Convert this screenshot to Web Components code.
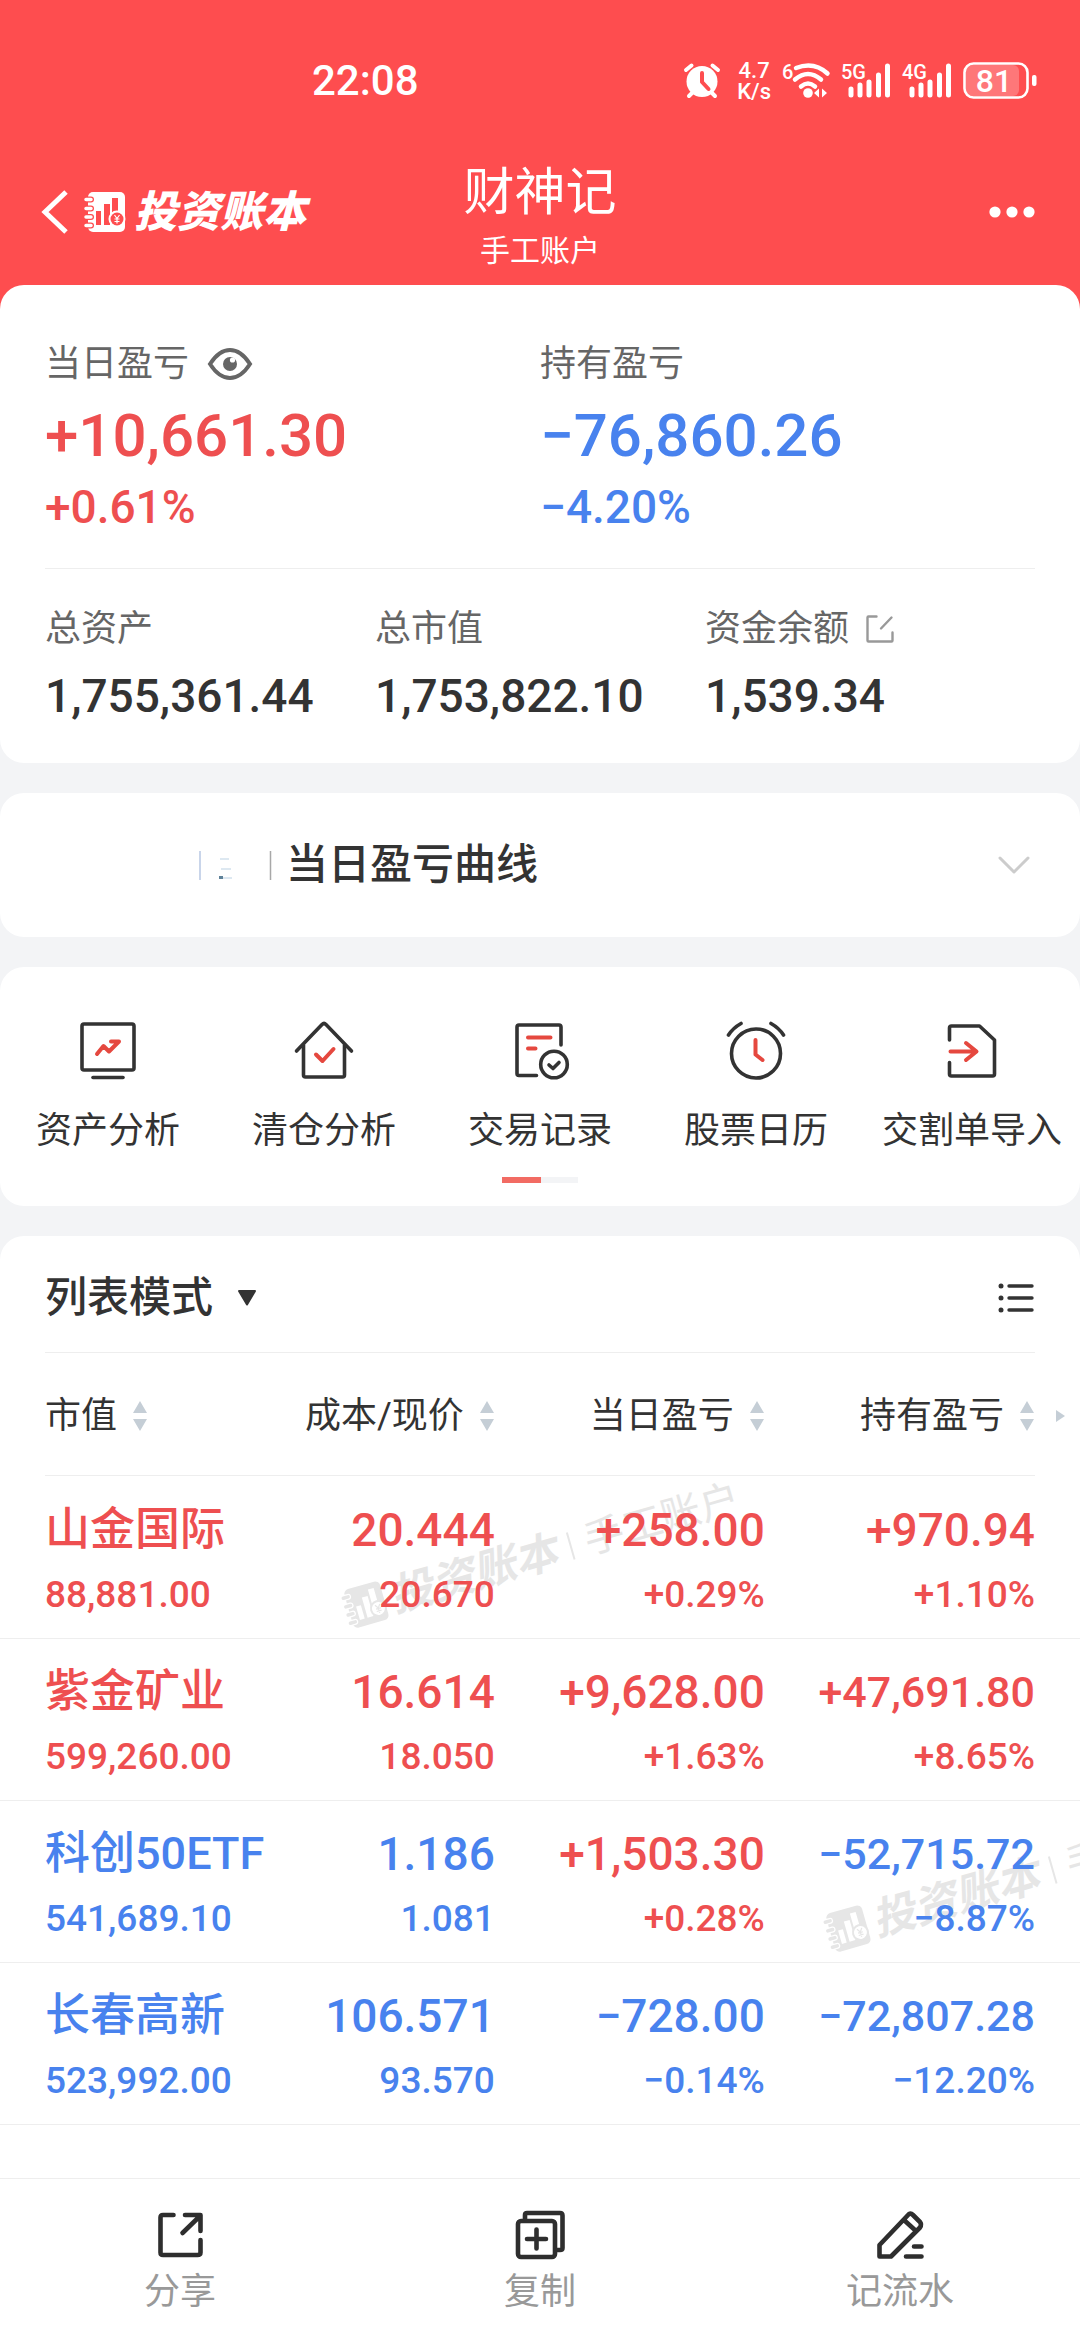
<!DOCTYPE html>
<html lang="zh-CN">
<head>
<meta charset="utf-8">
<meta name="viewport" content="width=device-width, initial-scale=1">
<title>投资账本</title>
<style>
  :root {
    --brand: #fe4d4f;
    --up: #ee4f50;
    --down: #4882ee;
    --ink: #333;
    --muted: #666;
    --faint: #999;
    --line: #eee;
    --page: #f3f4f6;
    --edge: 45px;
  }
  body {
    margin: 0;
    background: var(--page);
    color: var(--ink);
    font-family: Roboto, "Noto Sans CJK SC", sans-serif;
    font-size: 36px;
    line-height: 44px;
  }
</style>
</head>
<body>
<ledger-app>
  <status-bar slot="top" time="22:08"></status-bar>
  <nav-header slot="top">
    <span slot="title">财神记</span>
    <span slot="subtitle">手工账户</span>
  </nav-header>

  <ledger-card>
    <account-summary></account-summary>
  </ledger-card>
  <ledger-card>
    <curve-toggle>当日盈亏曲线</curve-toggle>
  </ledger-card>
  <ledger-card>
    <tool-strip>
      <tool-item icon="monitor">资产分析</tool-item>
      <tool-item icon="house">清仓分析</tool-item>
      <tool-item icon="record">交易记录</tool-item>
      <tool-item icon="clock">股票日历</tool-item>
      <tool-item icon="import">交割单导入</tool-item>
    </tool-strip>
  </ledger-card>
  <ledger-card class="last">
    <list-toolbar></list-toolbar>
    <holdings-table></holdings-table>
  </ledger-card>

  <bottom-bar slot="bottom">
    <bar-action icon="share">分享</bar-action>
    <bar-action icon="copy">复制</bar-action>
    <bar-action icon="pen">记流水</bar-action>
  </bottom-bar>
</ledger-app>

<script>
const RESET = `
  :host, * { box-sizing: border-box; }
  button, select { font: inherit; color: inherit; background: none; border: 0; padding: 0; margin: 0; cursor: pointer; }
  svg { display: block; flex: none; overflow: visible; }
`;

class Part extends HTMLElement {
  connectedCallback() {
    if (this.shadowRoot) return;
    this.attachShadow({ mode: 'open' });
    this.shadowRoot.innerHTML = `<style>:host{display:block}${RESET}${this.css()}</style>${this.html()}`;
  }
  css() { return ''; }
  html() { return '<slot></slot>'; }
}

/* Spiral-bound notebook with a bar chart and a coin */
const notebook = (body, cut) => `
  <svg class="book" width="42" height="42" viewBox="0 0 42 42" aria-hidden="true">
    <rect x="4" y="1" width="37" height="40" rx="5" fill="${body}"/>
    <g stroke="${cut}" stroke-width="6" stroke-linecap="round"><path d="M3 8.500H7M3 17.500H7M3 26H7M3 34.500H7"/></g>
    <g stroke="${body}" stroke-width="3.500" stroke-linecap="round"><path d="M2 8.500H7M2 17.500H7M2 26H7M2 34.500H7"/></g>
    <path d="M12 20h5v14h-5zM20 13h6v21h-6zM28 7h6v16h-6z" fill="${cut}"/>
    <circle cx="33" cy="28" r="8.500" fill="${body}"/><circle cx="33" cy="28" r="6.500" fill="${cut}"/>
    <path d="M30.500 24L33 27.500L35.500 24M33 27.500V32.500M30.500 28H35.500M30.500 30.500H35.500" fill="none" stroke="${body}" stroke-width="1.200"/>
  </svg>`;

customElements.define('ledger-app', class extends Part {
  css() { return `
    :host { display: flex; flex-direction: column; min-height: 100vh; }
    header { background: var(--brand); padding-bottom: 24px; margin-bottom: -24px; }
    main { flex: 1; display: flex; flex-direction: column; gap: 30px; }
  `; }
  html() { return `<header><slot name="top"></slot></header><main><slot></slot></main><slot name="bottom"></slot>`; }
});

customElements.define('status-bar', class extends Part {
  css() { return `
    :host { display: flex; align-items: center; justify-content: space-between; height: 157px; padding: 4px 43px 0 312px; color: #fff; }
    time { font-size: 42px; font-weight: 500; }
    .icons { display: flex; align-items: center; gap: 11px; }
    .alarm { margin-right: 6px; }
    .speed { font-size: 22px; line-height: 21px; font-weight: 500; text-align: center; }
    .speed span { display: block; }
    text { font-weight: 500; fill: #fff; }
  `; }
  signal(label) { return `
    <svg width="50" height="40" viewBox="0 0 50 40">
      <text x="0" y="18" font-size="20">${label}</text>
      <path d="M10 28V34M19 24V34M28 21V34M37.500 14V34M46.500 5V34" stroke="#fff" stroke-width="5" stroke-linecap="round"/>
    </svg>`; }
  html() { return `
    <time>${this.getAttribute('time')}</time>
    <div class="icons">
      <svg class="alarm" width="36" height="40" viewBox="0 0 36 40">
        <path d="M2 9L7.500 4.500M34 9L28.500 4.500M8 32L5 35M28 32L31 35" stroke="#fff" stroke-width="4" stroke-linecap="round"/>
        <circle cx="18" cy="20.500" r="15.500" fill="#fff"/>
        <path d="M18 12V21L24.500 28" fill="none" stroke="#fe4d4f" stroke-width="4" stroke-linecap="round" stroke-linejoin="round"/>
      </svg>
      <div class="speed"><span>4.7</span><span>K/s</span></div>
      <svg width="48" height="40" viewBox="0 0 48 40">
        <text x="0" y="18" font-size="20">6</text>
        <g fill="none" stroke="#fff" stroke-width="4.500" stroke-linecap="round">
          <path d="M14 7Q32 0 45.500 12.500M13 18.500Q26 7.500 39 18.500M19 25.500Q26 19.500 33 25.500"/>
        </g>
        <circle cx="26" cy="32" r="4.800" fill="#fff"/>
        <path d="M37 27.500V36.500L32 32zM40 27.500V36.500L45 32z" fill="#fff"/>
      </svg>
      ${this.signal('5G')}${this.signal('4G')}
      <svg width="74" height="40" viewBox="0 0 74 40">
        <rect x="3" y="4" width="53" height="31" rx="6" fill="#fff" fill-opacity=".24"/>
        <rect x="1.500" y="2.500" width="63" height="34" rx="9" fill="none" stroke="#fff" stroke-width="2.600"/>
        <rect x="69" y="14" width="4.500" height="11" rx="2" fill="#fff"/>
        <text x="31" y="31" font-size="32" text-anchor="middle">81</text>
      </svg>
    </div>`; }
});

customElements.define('nav-header', class extends Part {
  css() { return `
    :host { display: grid; grid-template-columns: 1fr auto 1fr; align-items: start; height: 128px; padding: 0 40px; color: #fff; }
    .side { display: flex; align-items: center; height: 110px; }
    .side.end { justify-content: flex-end; }
    .brand { display: flex; align-items: center; gap: 8px; margin-left: 14px; font-size: 43px; font-weight: 900; font-style: italic; }
    .titles { text-align: center; }
    h1 { margin: 0; font-size: 51px; line-height: 72px; font-weight: 400; }
    p { margin: 0; font-size: 30px; line-height: 44px; }
  `; }
  html() { return `
    <div class="side">
      <button aria-label="返回"><svg width="30" height="48" viewBox="0 0 30 48"><path d="M26 4L5 24L26 44" fill="none" stroke="#fff" stroke-width="5"/></svg></button>
      <div class="brand">${notebook('#fff', '#fe4d4f')}<span>投资账本</span></div>
    </div>
    <div class="titles"><h1><slot name="title"></slot></h1><p><slot name="subtitle"></slot></p></div>
    <div class="side end">
      <button aria-label="更多"><svg width="56" height="40" viewBox="0 0 56 40"><g fill="#fff"><circle cx="11" cy="20" r="5.600"/><circle cx="28" cy="20" r="5.600"/><circle cx="45" cy="20" r="5.600"/></g></svg></button>
    </div>`; }
});

customElements.define('ledger-card', class extends Part {
  css() { return `
    :host { background: #fff; border-radius: 24px; overflow: hidden; }
    :host(.last) { flex: 1; border-radius: 24px 24px 0 0; }
  `; }
});

customElements.define('account-summary', class extends Part {
  css() { return `
    :host { padding: 57px var(--edge) 22px; }
    dl { display: grid; margin: 0; }
    dt { display: flex; align-items: center; gap: 18px; color: var(--muted); }
    dd { margin: 0; }
    .pnl { grid-template-columns: 1fr 1fr; padding-bottom: 40px; border-bottom: 1px solid var(--line); }
    .pnl .main { font-size: 60px; line-height: 100px; font-weight: 500; }
    .pnl .rate { font-size: 46px; line-height: 42px; font-weight: 500; }
    .totals { grid-template-columns: 1fr 1fr 1fr; padding-top: 38px; }
    .totals dt { gap: 16px; }
    .totals dd { font-size: 46px; line-height: 90px; font-weight: 500; }
    .up { color: var(--up); }
    .down { color: var(--down); }
  `; }
  html() { return `
    <dl class="pnl">
      <div class="up"><dt>当日盈亏
        <button aria-label="隐藏金额"><svg width="46" height="34" viewBox="0 0 46 34">
          <path d="M3 17Q12 3 23 3T43 17Q34 31 23 31T3 17Z" fill="none" stroke="#666" stroke-width="4"/>
          <circle cx="23" cy="17" r="7" fill="#666"/><circle cx="25.500" cy="13" r="2.600" fill="#fff"/></svg></button></dt>
        <dd class="main">+10,661.30</dd><dd class="rate">+0.61%</dd></div>
      <div class="down"><dt>持有盈亏</dt><dd class="main">−76,860.26</dd><dd class="rate">−4.20%</dd></div>
    </dl>
    <dl class="totals">
      <div><dt>总资产</dt><dd>1,755,361.44</dd></div>
      <div><dt>总市值</dt><dd>1,753,822.10</dd></div>
      <div><dt>资金余额
        <button aria-label="编辑资金余额"><svg width="30" height="30" viewBox="0 0 30 30">
          <path d="M11.500 2.500H3.500Q2.500 2.500 2.500 3.500V26.500Q2.500 27.500 3.500 27.500H26.500Q27.500 27.500 27.500 26.500V18.500M16 14.500L26.500 3.500" fill="none" stroke="#999" stroke-width="2.400" stroke-linecap="round"/></svg></button></dt>
        <dd>1,539.34</dd></div>
    </dl>`; }
});

customElements.define('curve-toggle', class extends Part {
  css() { return `
    button { display: flex; align-items: center; width: 100%; height: 144px; padding: 0 48px 0 198px; font-size: 42px; font-weight: 500; }
    .trace { margin-right: 13px; }
    .chevron { margin-left: auto; }
  `; }
  html() { return `
    <button aria-expanded="false">
      <svg class="trace" width="75" height="36" viewBox="0 0 75 36" aria-hidden="true">
        <path d="M2 4V33" stroke="#c9d5ea" stroke-width="2"/>
        <path d="M72.500 4V33" stroke="#a8a8a8" stroke-width="1.500"/>
        <path d="M22 12H31M23 22H33M25 31H34" stroke="#dde8f1" stroke-width="2"/>
        <path d="M21 30.500H25" stroke="#5f8299" stroke-width="3"/>
      </svg>
      <slot></slot>
      <svg class="chevron" width="36" height="24" viewBox="0 0 36 24"><path d="M4 5L18 19L32 5" fill="none" stroke="#ccc" stroke-width="3" stroke-linecap="round" stroke-linejoin="round"/></svg>
    </button>`; }
});

customElements.define('tool-strip', class extends Part {
  css() { return `
    :host { padding: 46px 0 23px; }
    .tools { display: grid; grid-template-columns: repeat(5, 1fr); }
    .pager { display: flex; width: 76px; height: 6px; margin: 24px auto 0; background: var(--page); }
    .pager i { width: 39px; background: #f26b63; }
  `; }
  html() { return `<div class="tools"><slot></slot></div><div class="pager"><i></i></div>`; }
});

const TOOL_ICONS = {
  monitor: `<rect x="10" y="11" width="52" height="46" rx="2"/><path d="M21 64.500H51"/>
    <path class="r" d="M25 41L31.500 33L37 38.500L46.500 29M39 28.500H47L44 31.500"/>`,
  house: `<path d="M8.500 38L34 11.500Q36 9.500 38 11.500L63.500 38"/><path d="M15.500 32V62Q15.500 64 17.500 64H54.500Q56.500 64 56.500 62V32"/>
    <path class="r" d="M28 41.500L34.500 48L45.500 36"/>`,
  record: `<path d="M32.500 62.500H15Q13 62.500 13 60.500V14Q13 12 15 12H55Q57 12 57 14V32"/><circle cx="50" cy="51.500" r="13.300"/>
    <path d="M45 52L49 55.500L55 49.500"/><path class="r" d="M24 24.500H46.500M24 35.500H31.500"/>`,
  clock: `<circle cx="36" cy="40.500" r="24.500"/><path d="M8.500 22Q13 15 21 10.500M63.500 22Q59 15 51 10.500"/>
    <path class="r" d="M35.500 27V41.500L42.500 47"/>`,
  import: `<path d="M13.500 27V15Q13.500 13 15.500 13H43.500L58.500 27V61Q58.500 63 56.500 63H15.500Q13.500 63 13.500 61V49.500"/>
    <path class="r" d="M14.500 38.500H40M30 30L40.500 38.500L30 47"/>`
};

customElements.define('tool-item', class extends Part {
  css() { return `
    button { display: flex; flex-direction: column; align-items: center; gap: 24px; width: 100%; white-space: nowrap; }
    svg { fill: none; stroke: #333; stroke-width: 3.600; stroke-linecap: round; stroke-linejoin: round; }
    .r { stroke: #e5483f; stroke-width: 4; }
  `; }
  html() { return `<button><svg width="72" height="72" viewBox="0 0 72 72">${TOOL_ICONS[this.getAttribute('icon')]}</svg><span><slot></slot></span></button>`; }
});

customElements.define('list-toolbar', class extends Part {
  css() { return `
    :host { display: flex; align-items: center; justify-content: space-between; height: 117px; margin: 0 var(--edge); padding-top: 8px; border-bottom: 1px solid var(--line); }
    label { display: flex; align-items: center; gap: 23px; }
    select { appearance: none; font-size: 42px; font-weight: 500; line-height: 60px; outline: 0; }
  `; }
  html() { return `
    <label><select aria-label="显示模式"><option>列表模式</option></select>
      <svg width="20" height="18" viewBox="0 0 20 18"><path d="M2 2H18L10 15.500Z" fill="#333" stroke="#333" stroke-width="2" stroke-linejoin="round"/></svg></label>
    <button aria-label="列表设置"><svg width="38" height="34" viewBox="0 0 38 34">
      <path d="M12 5H35M12 17H35M12 29H35" stroke="#333" stroke-width="3.400" stroke-linecap="round"/>
      <g fill="#333"><circle cx="4" cy="5" r="2.500"/><circle cx="4" cy="17" r="2.500"/><circle cx="4" cy="29" r="2.500"/></g></svg></button>`; }
});

const COLUMNS = ['市值', '成本/现价', '当日盈亏', '持有盈亏'];
const HOLDINGS = [
  ['up', '山金国际', '88,881.00', '20.444', '20.670', '+258.00', '+0.29%', '+970.94', '+1.10%'],
  ['up', '紫金矿业', '599,260.00', '16.614', '18.050', '+9,628.00', '+1.63%', '+47,691.80', '+8.65%'],
  ['down', '科创50ETF', '541,689.10', '1.186', '1.081', '+1,503.30', '+0.28%', '−52,715.72', '−8.87%'],
  ['down', '长春高新', '523,992.00', '106.571', '93.570', '−728.00', '−0.14%', '−72,807.28', '−12.20%']
];

customElements.define('holdings-table', class extends Part {
  css() { return `
    :host { position: relative; z-index: 0; }
    table { width: 100%; table-layout: fixed; border-collapse: collapse; }
    .c1 { width: 25%; } .c2 { width: 21%; } .c3 { width: 25%; } .c4 { width: 29%; }
    th, td { padding: 0 2px 0 0; text-align: right; white-space: nowrap; font-weight: 400; }
    th:first-child, td:first-child { text-align: left; padding-left: var(--edge); }
    th:last-child, td:last-child { padding-right: var(--edge); }
    thead tr { height: 123px; background: linear-gradient(var(--line), var(--line)) 45px 100% / calc(100% - 90px) 1px no-repeat; }
    th button { display: inline-flex; align-items: center; gap: 15px; vertical-align: middle; }
    th:last-child { position: relative; }
    .more { position: absolute; right: 13px; top: 56px; }
    tbody tr { height: 162px; border-bottom: 1px solid var(--line); }
    tbody td { padding-top: 10px; }
    b, small { display: block; font-weight: 500; }
    b { font-size: 46px; line-height: 66px; }
    b.name { font-size: 45px; }
    b.long { font-size: 43px; }
    small { font-size: 37px; line-height: 64px; }
    .up { color: var(--up); }
    .down { color: var(--down); }
  `; }
  cell(main, sub, tone, extra = '') {
    return `<td class="${tone}"><b class="${extra}">${main}</b><small>${sub}</small></td>`;
  }
  tone(value) { return value.startsWith('+') ? 'up' : 'down'; }
  html() {
    const sort = `<svg width="16" height="32" viewBox="0 0 16 32"><path d="M8 1L15 13H1ZM8 31L15 19H1Z" fill="#c5ced6"/></svg>`;
    const head = COLUMNS.map((c, i) => `<th scope="col"><button>${c}${sort}</button>${i === 3
      ? '<svg class="more" width="12" height="14" viewBox="0 0 12 14"><path d="M1 1V13L10 7Z" fill="#c5ced6"/></svg>' : ''}</th>`).join('');
    const rows = HOLDINGS.map(([t, name, value, cost, price, day, dayRate, hold, holdRate]) => `<tr>
      ${this.cell(name, value, t, 'name')}${this.cell(cost, price, t)}${this.cell(day, dayRate, this.tone(day))}
      ${this.cell(hold, holdRate, this.tone(hold), hold.length > 9 ? 'long' : '')}</tr>`).join('');
    return `<water-marks></water-marks><table>
      <colgroup><col class="c1"><col class="c2"><col class="c3"><col class="c4"></colgroup>
      <thead><tr>${head}</tr></thead><tbody>${rows}</tbody></table>`;
  }
});

/* Tilted brand marks scattered behind the table rows */
customElements.define('water-marks', class extends Part {
  css() { return `
    :host { position: absolute; inset: 0; z-index: -1; overflow: hidden; pointer-events: none; color: #e6e6e6; }
    div { position: absolute; display: flex; align-items: center; white-space: nowrap; transform-origin: 21px 50%; transform: rotate(-16deg); }
    .a { left: 344px; top: 230px; }
    .b { left: 826px; top: 554px; }
    strong { margin-left: 6px; font-size: 43px; font-weight: 700; font-style: italic; }
    i { width: 2px; height: 28px; margin: 0 14px; background: #e6e6e6; }
    span { font-size: 40px; }
  `; }
  html() {
    const mark = `${notebook('#e6e6e6', '#fff')}<strong>投资账本</strong><i></i><span>手工账户</span>`;
    return `<div class="a">${mark}</div><div class="b">${mark}</div>`;
  }
});

customElements.define('bottom-bar', class extends Part {
  css() { return `
    :host { display: grid; grid-template-columns: repeat(3, 1fr); height: 162px; padding-top: 30px; border-top: 1px solid var(--line); background: #fff; position: sticky; bottom: 0; z-index: 2; }
  `; }
});

const BAR_ICONS = {
  share: `<path d="M19.500 6H9Q6.500 6 6.500 8.500V43.500Q6.500 46 9 46H43.500Q46.500 46 46.500 43.500V31M31 6H46.500V22M45 8L28.500 24"/>`,
  copy: `<rect x="4" y="12" width="37" height="36" rx="3"/><path d="M11 10V6Q11 4 13 4H46Q48.500 4 48.500 6.500V39Q48.500 41 46 41H43M22.500 20.500V39.500M13 30H32"/>`,
  pen: `<path d="M35 5Q37 4 39 6L46 13Q48 15.500 46 18.500L17 47.500H5.500V36L35 5ZM30.500 11.500L42 22M40 37.500H47.500M32 47.500H47.500"/>`
};

customElements.define('bar-action', class extends Part {
  css() { return `
    button { display: flex; flex-direction: column; align-items: center; gap: 9px; width: 100%; color: var(--faint); }
    svg { fill: none; stroke: #2e2e2e; stroke-width: 4.600; stroke-linecap: round; stroke-linejoin: round; }
  `; }
  html() { return `<button><svg width="52" height="52" viewBox="0 0 52 52">${BAR_ICONS[this.getAttribute('icon')]}</svg><span><slot></slot></span></button>`; }
});
</script>
</body>
</html>
